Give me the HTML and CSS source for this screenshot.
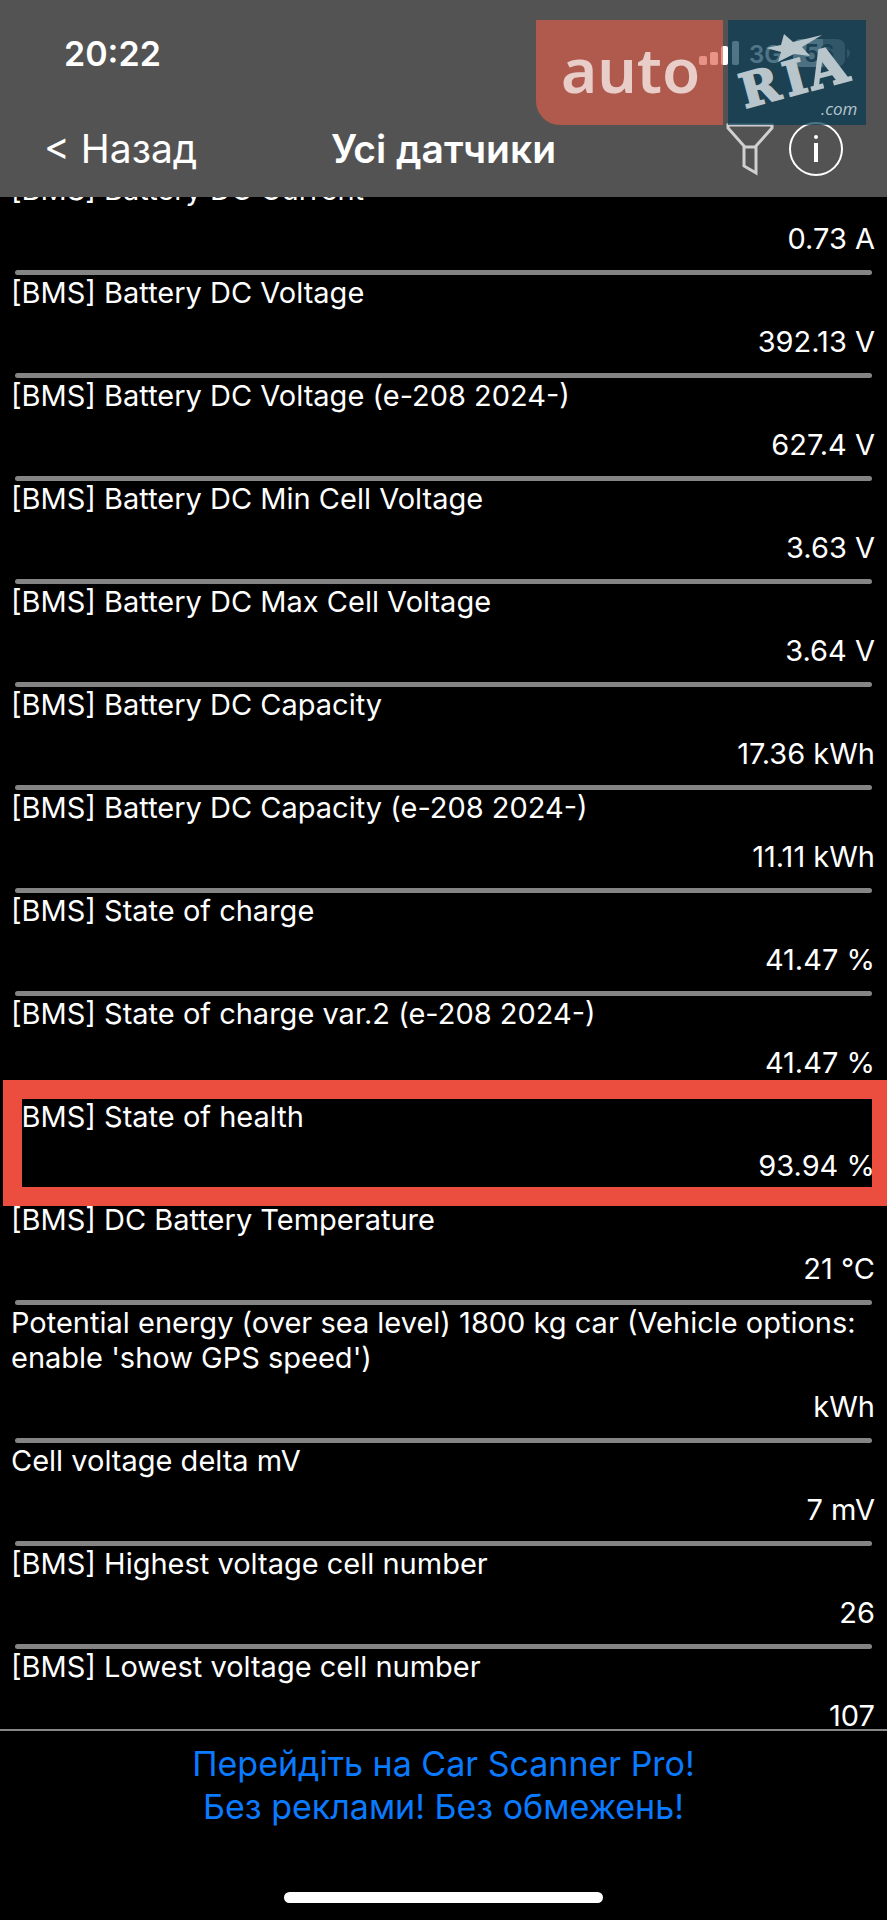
FILE: index.html
```html
<!DOCTYPE html>
<html lang="uk">
<head>
  <meta charset="UTF-8" />
  <meta name="viewport" content="width=device-width, initial-scale=1" />
  <title>Усі датчики</title>
  <link rel="stylesheet" href="styles.css">
</head>
<body>
  <div class="screen">
    <header class="header">
      <div class="status-bar">
        <span class="time">20:22</span>
        <svg class="status-icons" width="152" height="30" viewBox="0 0 152 30" fill="#fff">
          <rect x="0" y="18" width="8" height="9" rx="2" />
          <rect x="11" y="14" width="8" height="13" rx="2" />
          <rect x="22" y="8" width="7" height="19" rx="2" />
          <rect x="33" y="3" width="7" height="24" rx="2" />
          <text class="network" x="50" y="25">3G</text>
          <rect x="94" y="1" width="52" height="28" rx="8" opacity="0.4" />
          <path d="M102 1H124V29H102A8 8 0 0 1 94 21V9A8 8 0 0 1 102 1Z" opacity="0.85" />
          <path d="M148 11Q151 12 151 15T148 20Z" opacity="0.4" />
          <text class="charge" x="105" y="24">56</text>
        </svg>
      </div>
      <nav class="nav-bar">
        <a class="back" href="#">&lt; Назад</a>
        <h1>Усі датчики</h1>
        <div class="nav-actions">
          <button type="button" aria-label="Фільтр">
            <svg width="48" height="54" viewBox="0 0 48 54" fill="none" stroke="#d0d0d0" stroke-width="3">
              <path d="M2 3H46V6L30 24V51L18 44V24L2 6Z" />
              <path d="M18 25H30" />
            </svg>
          </button>
          <button type="button" aria-label="Інформація">
            <svg width="54" height="54" viewBox="0 0 54 54">
              <circle cx="27" cy="27" r="26" fill="none" stroke="#fff" stroke-width="2" />
              <circle cx="27" cy="15" r="2" fill="#fff" />
              <path d="M27 21V40" stroke="#fff" stroke-width="4" />
            </svg>
          </button>
        </div>
      </nav>
      <div class="watermark">
        <div class="wm-auto">auto</div>
        <svg class="wm-ria" viewBox="0 0 138 105">
          <path d="M56 14L65 22L94 15L74 27L82 36L66 34L50 42L53 32L38 28L53 25Z" />
          <g class="wm-letters" transform="translate(18 88) rotate(-15)">
            <text x="-1" y="0">R</text>
            <text x="44" y="0">I</text>
            <text class="wm-big" x="69" y="0">A</text>
          </g>
          <text class="wm-com" x="93" y="95">.com</text>
        </svg>
      </div>
    </header>

    <main class="sensors">
      <ul class="sensor-list">
        <li><span class="name">[BMS] Battery DC Current</span><span class="value">0.73 A</span></li>
        <li><span class="name">[BMS] Battery DC Voltage</span><span class="value">392.13 V</span></li>
        <li><span class="name">[BMS] Battery DC Voltage (e-208 2024-)</span><span class="value">627.4 V</span></li>
        <li><span class="name">[BMS] Battery DC Min Cell Voltage</span><span class="value">3.63 V</span></li>
        <li><span class="name">[BMS] Battery DC Max Cell Voltage</span><span class="value">3.64 V</span></li>
        <li><span class="name">[BMS] Battery DC Capacity</span><span class="value">17.36 kWh</span></li>
        <li><span class="name">[BMS] Battery DC Capacity (e-208 2024-)</span><span class="value">11.11 kWh</span></li>
        <li><span class="name">[BMS] State of charge</span><span class="value">41.47 %</span></li>
        <li><span class="name">[BMS] State of charge var.2 (e-208 2024-)</span><span class="value">41.47 %</span></li>
        <li class="marked"><span class="name">[BMS] State of health</span><span class="value">93.94 %</span></li>
        <li><span class="name">[BMS] DC Battery Temperature</span><span class="value">21 °C</span></li>
        <li><span class="name">Potential energy (over sea level) 1800 kg car (Vehicle options: enable 'show GPS speed')</span><span class="value">kWh</span></li>
        <li><span class="name">Cell voltage delta mV</span><span class="value">7 mV</span></li>
        <li><span class="name">[BMS] Highest voltage cell number</span><span class="value">26</span></li>
        <li><span class="name">[BMS] Lowest voltage cell number</span><span class="value">107</span></li>
      </ul>
    </main>

    <footer class="footer">
      <a class="promo" href="#">Перейдіть на Car Scanner Pro!<br>Без реклами! Без обмежень!</a>
      <div class="home-indicator"></div>
    </footer>
  </div>
</body>
</html>
```
FILE: styles.css
```css
* {
  box-sizing: border-box;
}
body {
  margin: 0;
  background: #000;
  color: #fff;
  font-family: Inter, "Noto Sans", sans-serif;
}
.screen {
  height: 100vh;
  display: flex;
  flex-direction: column;
}

/* header */
.header {
  position: relative;
  z-index: 2;
  background: #535353;
}
.status-bar {
  display: flex;
  justify-content: space-between;
  align-items: center;
  height: 102px;
  padding: 4px 36px 0 64px;
}
.time {
  font-size: 34px;
  font-weight: 600;
}
.network,
.charge {
  font-size: 24px;
  font-weight: 600;
}
.charge {
  fill: #535353;
}
.nav-bar {
  display: grid;
  grid-template-columns: 1fr auto 1fr;
  align-items: center;
  height: 95px;
  padding: 0 44px 2px;
}
.back {
  color: #fff;
  font-size: 39px;
  text-decoration: none;
}
.nav-bar h1 {
  margin: 0;
  font-size: 39px;
  font-weight: 600;
}
.nav-actions {
  display: flex;
  justify-content: flex-end;
  gap: 15px;
}
.nav-actions button {
  padding: 0;
  border: none;
  background: none;
  cursor: pointer;
}
.nav-actions svg {
  display: block;
}

/* auto.ria logo over the header */
.watermark {
  position: absolute;
  top: 20px;
  right: 21px;
  display: flex;
  gap: 5px;
  height: 105px;
}
.wm-auto {
  width: 187px;
  padding-left: 25px;
  border-bottom-left-radius: 24px;
  background: rgba(222, 93, 75, 0.67);
  color: #e8cdc9;
  font-family: "Noto Sans", sans-serif;
  font-size: 62px;
  font-weight: 600;
  line-height: 98px;
}
.wm-ria {
  width: 138px;
  background: rgba(4, 59, 84, 0.7);
  fill: #b8c5cb;
}
.wm-letters {
  font-family: "DejaVu Serif", serif;
  font-size: 47px;
  font-weight: 700;
  stroke: #b8c5cb;
  stroke-width: 2px;
}
.wm-big {
  font-size: 51px;
}
.wm-com {
  font-family: "Open Sans", sans-serif;
  font-size: 17px;
  font-style: italic;
}

/* sensor list */
.sensors {
  flex: 1;
  min-height: 0;
  overflow: hidden;
}
.sensor-list {
  margin: -25px 0 0;
  padding: 0;
  list-style: none;
}
.sensor-list li {
  position: relative;
  display: flex;
  flex-direction: column;
  gap: 14px;
  padding: 0 12px 0 11px;
  font-size: 29px;
  line-height: 35px;
}
.sensor-list li::after {
  content: "";
  height: 5px;
  margin: 0 3px 0 4px;
  border-radius: 3px;
  background: #848484;
}
.value {
  text-align: right;
}
.marked::before {
  content: "";
  position: absolute;
  z-index: 1;
  top: -19px;
  right: -4px;
  bottom: -4px;
  left: 3px;
  border: 19px solid #eb4d3f;
}

/* footer */
.footer {
  display: flex;
  flex-direction: column;
  align-items: center;
  padding: 11px 0 17px;
  border-top: 2px solid #868686;
}
.promo {
  color: #0a7aff;
  font-size: 34px;
  line-height: 43px;
  text-align: center;
  text-decoration: none;
}
.home-indicator {
  width: 36%;
  height: 11px;
  margin-top: 64px;
  border-radius: 6px;
  background: #fff;
}
```
